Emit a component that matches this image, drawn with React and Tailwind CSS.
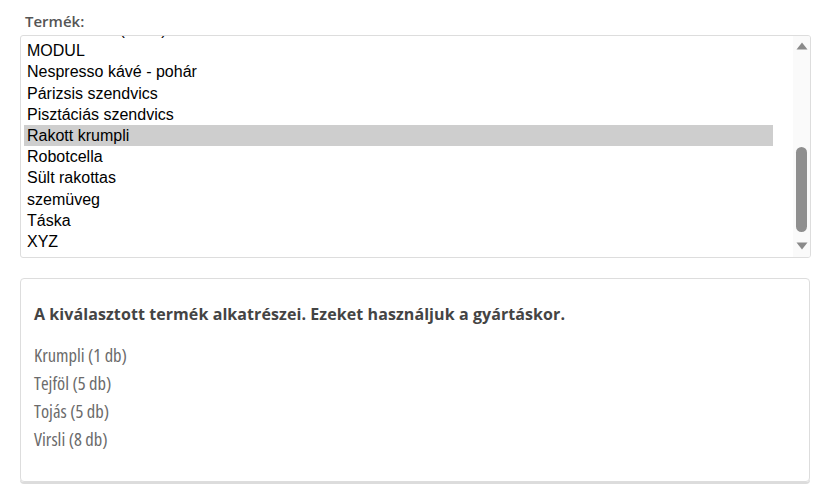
import React from "react";

const items = [
  "Kávéfőző tál (fehér)",
  "MODUL",
  "Nespresso kávé - pohár",
  "Párizsis szendvics",
  "Pisztáciás szendvics",
  "Rakott krumpli",
  "Robotcella",
  "Sült rakottas",
  "szemüveg",
  "Táska",
  "XYZ",
];

const parts = ["Krumpli (1 db)", "Tejföl (5 db)", "Tojás (5 db)", "Virsli (8 db)"];

export default function App() {
  return (
    <div className="w-[822px] h-[491px] bg-white px-[20px] pt-[11px] font-['Open_Sans',sans-serif]">
      <div className="pl-[5px] text-[15px] font-semibold leading-[21px] text-[#555]">
        Termék:
      </div>
      <div className="mt-[3px] flex h-[223px] w-[791px] overflow-hidden rounded-[3px] border border-[#ddd]">
        <div className="flex-1 overflow-hidden pl-[3px] pr-[20px]">
          <div className="-mt-[17px] font-['Liberation_Sans',Arial,sans-serif]">
            {items.map((it) => (
              <div
                key={it}
                className={
                  it === "Rakott krumpli"
                    ? "h-[21.2px] bg-[#cecece] pl-[3px] text-[16px] leading-[21.2px] text-black"
                    : "h-[21.2px] pl-[3px] text-[16px] leading-[21.2px] text-black"
                }
              >
                {it}
              </div>
            ))}
          </div>
        </div>
        <div className="flex w-[17px] flex-col items-center bg-[#fafafa]">
          <svg width="12" height="8" viewBox="0 0 12 8" className="mt-[6px] shrink-0">
            <path d="M0.5 7.5 L6 0.5 L11.5 7.5 Z" fill="#8a8a8a" />
          </svg>
          <div className="flex w-full flex-1 flex-col items-center pt-[97px] pb-[9px]">
            <div className="h-[85px] w-[11px] rounded-full bg-[#8f8f8f]" />
          </div>
          <svg width="12" height="8" viewBox="0 0 12 8" className="mb-[7px] shrink-0">
            <path d="M0.5 0.5 L6 7.5 L11.5 0.5 Z" fill="#8a8a8a" />
          </svg>
        </div>
      </div>
      <div className="mt-[20px] h-[204px] w-[790px] rounded-[4px] border border-[#ddd] px-[13px] pt-[23px] shadow-[0_2px_0_#dcdcdc]">
        <div className="text-[16px] font-bold leading-[24px] tracking-[0.08px] text-[#444]">
          A kiválasztott termék alkatrészei. Ezeket használjuk a gyártáskor.
        </div>
        <div className="mt-[15px]">
          {parts.map((p) => (
            <div key={p} className="text-[18.5px] font-normal leading-[28px] text-[#6b6b6b] [font-stretch:condensed]">
              {p}
            </div>
          ))}
        </div>
      </div>
    </div>
  );
}
